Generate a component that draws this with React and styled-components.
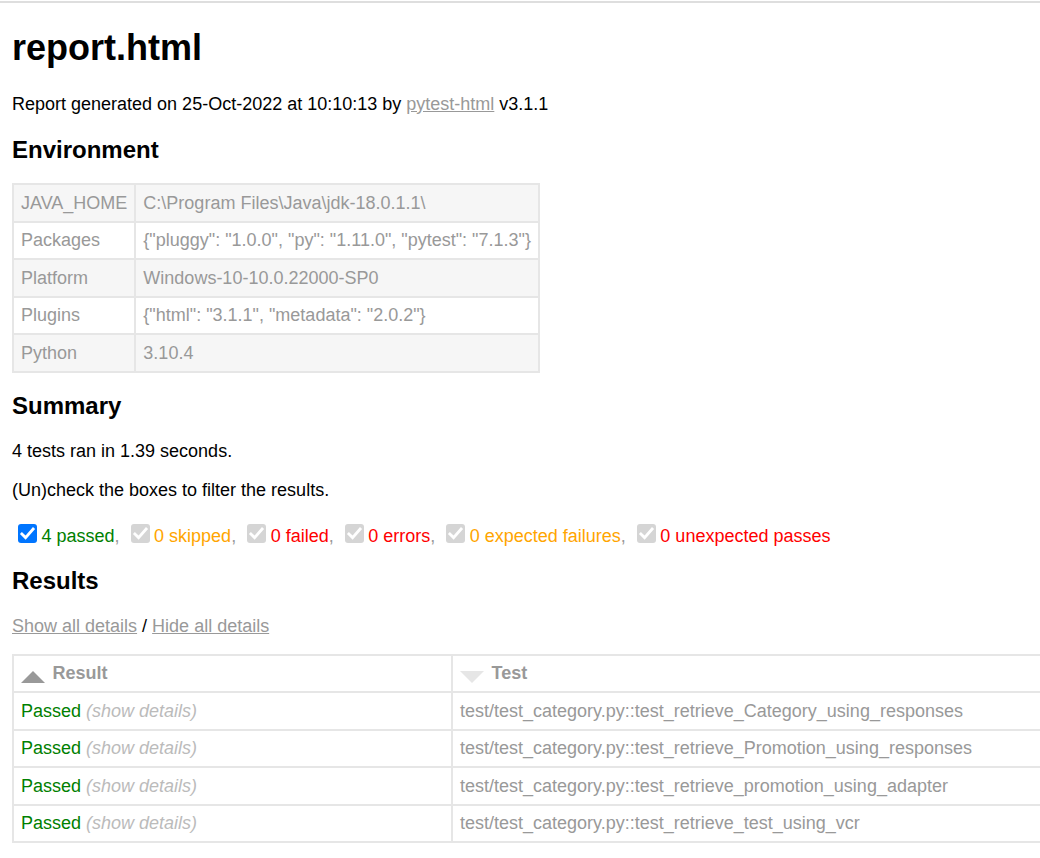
import React from "react";
import styled, { createGlobalStyle } from "styled-components";

const GlobalStyle = createGlobalStyle`
  html, body {
    margin: 0;
    padding: 0;
    background: #fff;
    overflow: hidden;
  }
  body {
    font-family: "Liberation Sans", Arial, Helvetica, sans-serif;
    font-size: 18px;
    color: #999;
  }
`;

const TopRule = styled.div`
  height: 2px;
  margin-top: 1px;
  background: #dedede;
`;

const Page = styled.div`
  padding: 0 12px;
`;

const Heading = styled.h1`
  margin: 24px 0 26px;
  font-size: 36px;
  line-height: 41px;
  font-weight: bold;
  color: #000;
`;

const Title = styled.h2`
  margin: 0 0 ${props => props.$mb}px;
  font-size: 24px;
  line-height: 28px;
  font-weight: bold;
  color: #000;
`;

const Text = styled.p`
  margin: 0 0 ${props => props.$mb}px;
  line-height: 21px;
  color: #000;
`;

const Link = styled.a`
  color: #999;
  text-decoration: underline;
  cursor: pointer;
`;

const Table = styled.table`
  border-collapse: collapse;
  margin-bottom: ${props => props.$mb || 0}px;
  color: #999;
  font-size: 18px;

  td, th {
    padding: 7.5px 7px;
    line-height: 20.5px;
    border: 2px solid #e6e6e6;
    text-align: left;
    white-space: nowrap;
  }
`;

const EnvRow = styled.tr`
  &:nth-child(odd) {
    background: #f6f6f6;
  }
`;

const ResultsTable = styled(Table)`
  table-layout: fixed;
  width: 1100px;

  th {
    font-weight: bold;
    cursor: pointer;
  }
`;

const SortIcon = styled.span`
  float: left;
  width: 0;
  height: 0;
  margin: 7.5px 7.5px 0 0;
  border-left: 12px solid transparent;
  border-right: 12px solid transparent;
  ${props =>
    props.$active
      ? "border-bottom: 12px solid #999;"
      : "border-top: 12px solid #e6e6e6;"}
`;

const Outcome = styled.span`
  color: green;
`;

const Expander = styled.span`
  color: #bbb;
  font-style: italic;
  cursor: pointer;
`;

const FilterRow = styled.div`
  display: flex;
  align-items: flex-end;
  margin-bottom: 20px;
`;

const Filter = styled.label`
  display: inline-flex;
  align-items: flex-end;
  line-height: 21px;
`;

const Box = styled.span`
  display: block;
  width: 19px;
  height: 19px;
  margin: 0 4.5px 4.3px 6px;
  border-radius: 3px;
  background: ${props => (props.$disabled ? "#d5d5d5" : "#0075ff")};

  svg {
    display: block;
  }
`;

const Count = styled.span`
  color: ${props => props.$color};
`;

const Comma = styled.span`
  color: #999;
  margin-right: 5px;
`;

const Checkbox = ({ disabled }) => (
  <Box $disabled={disabled} role="checkbox" aria-checked="true">
    <svg width="19" height="19" viewBox="0 0 19 19">
      <path
        d="M3.9 9.9 L7.6 13.6 L15.1 5.1"
        fill="none"
        stroke="#fff"
        strokeWidth="2.8"
        strokeLinecap="square"
      />
    </svg>
  </Box>
);

const environment = [
  ["JAVA_HOME", "C:\\Program Files\\Java\\jdk-18.0.1.1\\"],
  ["Packages", '{"pluggy": "1.0.0", "py": "1.11.0", "pytest": "7.1.3"}'],
  ["Platform", "Windows-10-10.0.22000-SP0"],
  ["Plugins", '{"html": "3.1.1", "metadata": "2.0.2"}'],
  ["Python", "3.10.4"],
];

const filters = [
  { label: "4 passed", color: "green", disabled: false },
  { label: "0 skipped", color: "orange", disabled: true },
  { label: "0 failed", color: "red", disabled: true },
  { label: "0 errors", color: "red", disabled: true },
  { label: "0 expected failures", color: "orange", disabled: true },
  { label: "0 unexpected passes", color: "red", disabled: true },
];

const tests = [
  "test/test_category.py::test_retrieve_Category_using_responses",
  "test/test_category.py::test_retrieve_Promotion_using_responses",
  "test/test_category.py::test_retrieve_promotion_using_adapter",
  "test/test_category.py::test_retrieve_test_using_vcr",
];

const App = () => (
  <>
    <GlobalStyle />
    <TopRule />
    <Page>
      <Heading>report.html</Heading>
      <Text $mb={21}>
        Report generated on 25-Oct-2022 at 10:10:13 by{" "}
        <Link href="#">pytest-html</Link> v3.1.1
      </Text>

      <Title $mb={19}>Environment</Title>
      <Table $mb={19}>
        <tbody>
          {environment.map(([key, value]) => (
            <EnvRow key={key}>
              <td>{key}</td>
              <td>{value}</td>
            </EnvRow>
          ))}
        </tbody>
      </Table>

      <Title $mb={21}>Summary</Title>
      <Text $mb={18}>4 tests ran in 1.39 seconds.</Text>
      <Text $mb={23}>(Un)check the boxes to filter the results.</Text>
      <FilterRow>
        {filters.map((f, i) => (
          <Filter key={f.label}>
            <Checkbox disabled={f.disabled} />
            <Count $color={f.color}>{f.label}</Count>
            {i < filters.length - 1 ? <Comma>,</Comma> : null}
          </Filter>
        ))}
      </FilterRow>

      <Title $mb={21}>Results</Title>
      <Text $mb={17}>
        <Link href="#">Show all details</Link> /{" "}
        <Link href="#">Hide all details</Link>
      </Text>
      <ResultsTable>
        <colgroup>
          <col style={{ width: 439 }} />
          <col />
        </colgroup>
        <thead>
          <tr>
            <th>
              <SortIcon $active />
              Result
            </th>
            <th>
              <SortIcon />
              Test
            </th>
          </tr>
        </thead>
        <tbody>
          {tests.map(name => (
            <tr key={name}>
              <td>
                <Outcome>Passed</Outcome> <Expander>(show details)</Expander>
              </td>
              <td>{name}</td>
            </tr>
          ))}
        </tbody>
      </ResultsTable>
    </Page>
  </>
);

export default App;
